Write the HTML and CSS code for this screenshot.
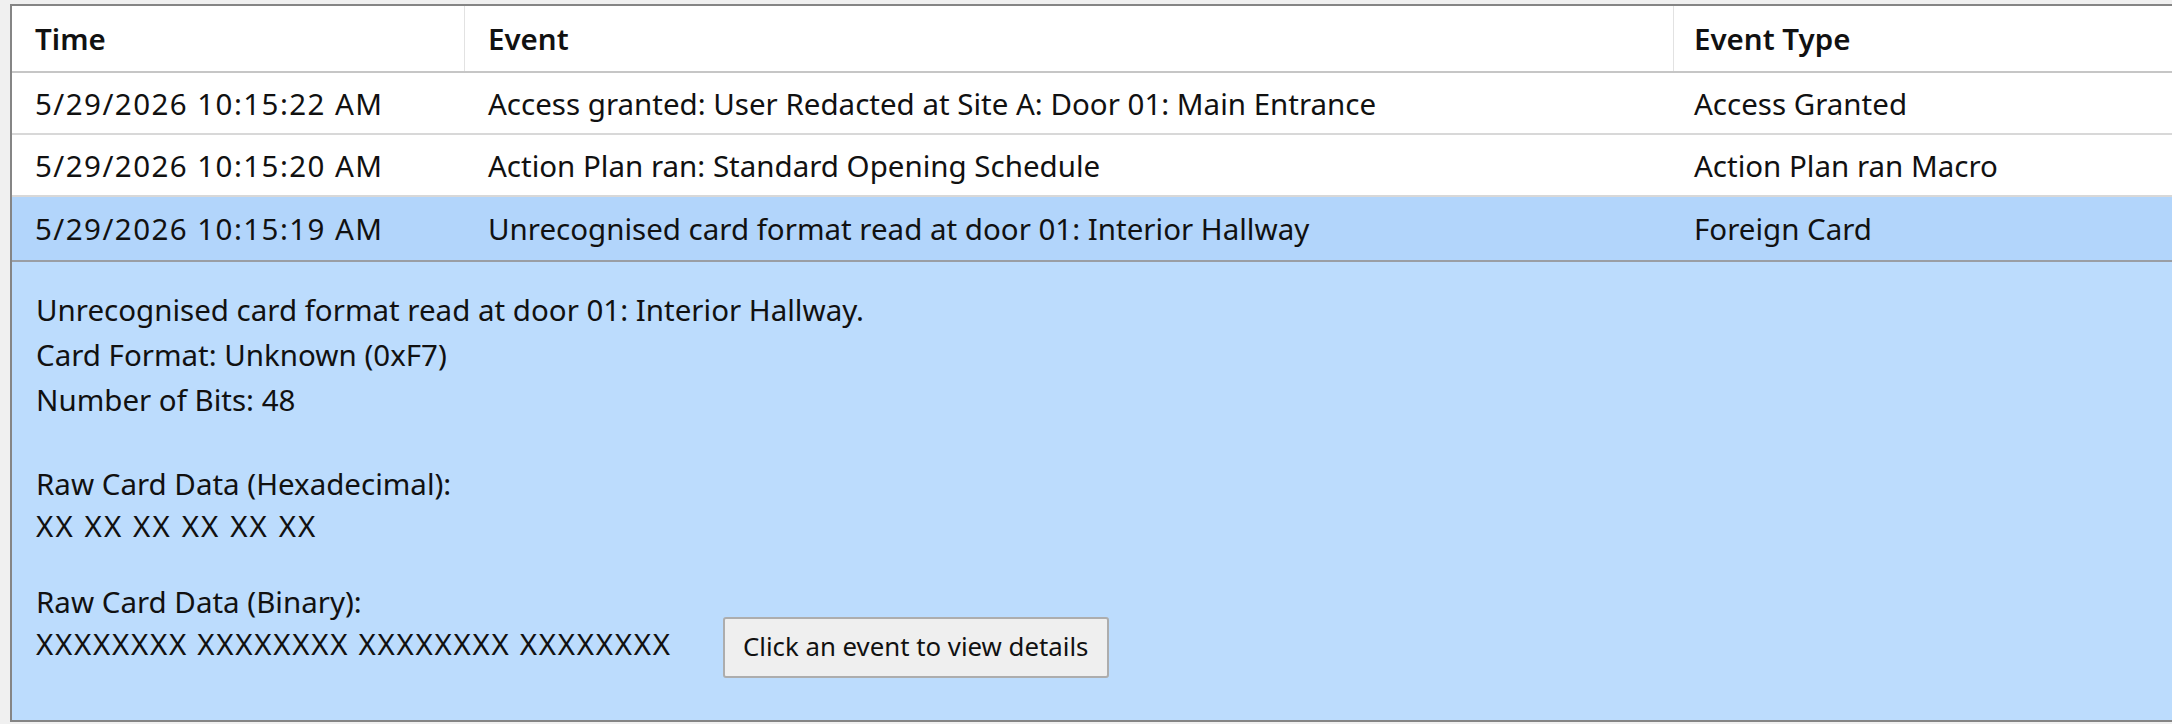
FILE: index.html
```html
<!DOCTYPE html>
<html lang="en">
<head>
<meta charset="utf-8">
<title>Event Log</title>
<link rel="stylesheet" href="styles.css">
</head>
<body>
<div class="log">
  <div class="row head">
    <div class="cell c-time">Time</div>
    <div class="cell c-event">Event</div>
    <div class="cell c-type">Event Type</div>
  </div>
  <div class="row">
    <div class="cell c-time time">5/29/2026 10:15:22 AM</div>
    <div class="cell c-event">Access granted: User Redacted at Site A: Door 01: Main Entrance</div>
    <div class="cell c-type">Access Granted</div>
  </div>
  <div class="row">
    <div class="cell c-time time">5/29/2026 10:15:20 AM</div>
    <div class="cell c-event">Action Plan ran: Standard Opening Schedule</div>
    <div class="cell c-type">Action Plan ran Macro</div>
  </div>
  <div class="row selected">
    <div class="cell c-time time">5/29/2026 10:15:19 AM</div>
    <div class="cell c-event">Unrecognised card format read at door 01: Interior Hallway</div>
    <div class="cell c-type">Foreign Card</div>
  </div>
  <div class="details">
    <div class="para p1">
      <div>Unrecognised card format read at door 01: Interior Hallway.</div>
      <div>Card Format: Unknown (0xF7)</div>
      <div>Number of Bits: 48</div>
    </div>
    <div class="para p2">
      <div>Raw Card Data (Hexadecimal):</div>
      <div class="xx">XX XX XX XX XX XX</div>
    </div>
    <div class="para p3">
      <div>Raw Card Data (Binary):</div>
      <div class="bin-row">
        <span class="xx bin">XXXXXXXX XXXXXXXX XXXXXXXX XXXXXXXX</span>
        <button class="btn" type="button">Click an event to view details</button>
      </div>
    </div>
  </div>
</div>
</body>
</html>
```
FILE: styles.css
```css
* { box-sizing: border-box; }

html, body {
  margin: 0;
  padding: 0;
  background: #f0f0f0;
  overflow: hidden;
}

body {
  font-family: "Noto Sans", "Open Sans", sans-serif;
  font-size: 29.5px;
  color: #111;
}

.log {
  margin: 4px 0 0 10px;
  border: 2px solid #858585;
  border-right: none;
  background: #fff;
}

.row {
  display: grid;
  grid-template-columns: 453px 1209px 1fr;
  height: 62px;
  border-bottom: 2px solid #d8d8d8;
  background: #fff;
}

.row.head {
  height: 67px;
  border-bottom: 2px solid #c6c6c6;
  font-weight: 600;
}

.cell {
  display: flex;
  align-items: center;
  white-space: nowrap;
  overflow: hidden;
}

.c-time { padding-left: 23px; }
.c-event { padding-left: 23px; }
.c-type { padding-left: 20px; }

.head .c-time,
.head .c-event {
  border-right: 1px solid #e2e2e2;
}

.time { letter-spacing: 1.45px; }

.row.selected {
  height: 65px;
  background: #b2d5fb;
  border-bottom: 2px solid #9a9ea4;
}

.details {
  background: #bcdcfd;
  height: 458px;
  padding: 25px 0 0 24px;
}

.para > div { white-space: nowrap; }

.p1 { line-height: 45px; }
.p2 { line-height: 42px; margin-top: 41px; }
.p3 { line-height: 42px; margin-top: 34px; }

.xx { letter-spacing: 2.1px; }
.xx.bin { letter-spacing: 1.7px; }

.bin-row {
  display: flex;
  align-items: center;
  height: 42px;
}

.btn {
  margin: 6px 0 0 51px;
  width: 386px;
  height: 61px;
  flex: none;
  padding: 0 16px;
  font-family: "Noto Sans", "Open Sans", sans-serif;
  font-size: 25.8px;
  color: #111;
  background: #efefef;
  border: 2px solid #adadad;
  border-radius: 3px;
  line-height: 1;
}
```
